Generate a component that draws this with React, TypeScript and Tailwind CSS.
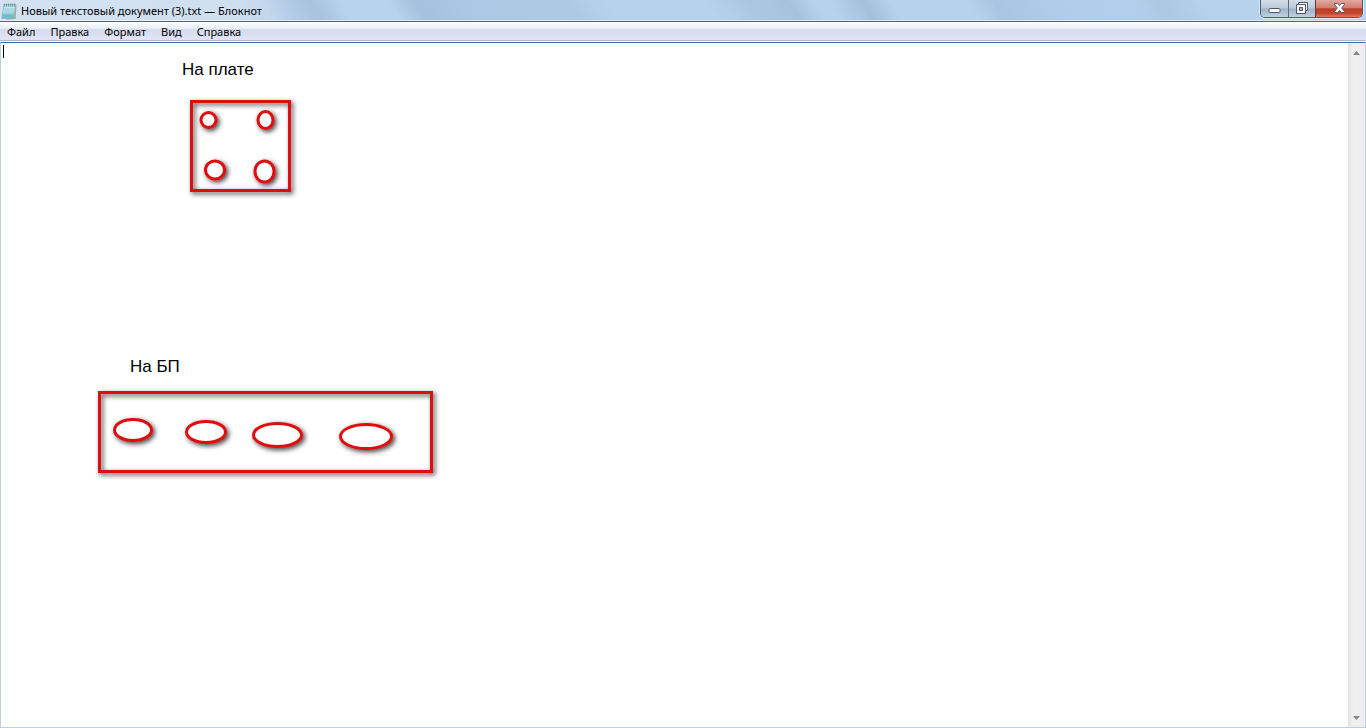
import React, { useState } from 'react';

const menuItems = ['Файл', 'Правка', 'Формат', 'Вид', 'Справка'];

const boardPins = [
  { cx: 207.5, cy: 77, rx: 7.5, ry: 7.5 },
  { cx: 264.5, cy: 77, rx: 7.5, ry: 8.5 },
  { cx: 214, cy: 127, rx: 9.5, ry: 9 },
  { cx: 263.5, cy: 128.5, rx: 9.5, ry: 10.5 },
];

const supplyPins = [
  { cx: 132, cy: 387, rx: 18.5, ry: 10.5 },
  { cx: 205, cy: 389, rx: 19.5, ry: 10.5 },
  { cx: 276.5, cy: 392, rx: 24, ry: 11.5 },
  { cx: 365, cy: 393.5, rx: 25.5, ry: 12 },
];

function NotepadIcon() {
  return (
    <svg width="16" height="18" viewBox="0 0 16 18" aria-hidden="true">
      <path d="M13.500 2l2 1-.8 14-10 .8z" fill="#b5a98d" />
      <path d="M3 2.500h11.500L13 16.500H.8z" fill="#a5d9e4" stroke="#7fb4c0" strokeWidth=".8" />
      <path d="M3.200 5h10.500l-.9 5.500H2.200z" fill="#c6ebf2" />
      <path d="M3.200 7h10M3 9h10M2.600 11h10M2.200 13h10" stroke="#79bccb" strokeWidth=".7" />
      <path d="M1.800 12.500h11L12.600 16H1.200z" fill="#6fb9c8" />
      <path d="M3.500 1.500v3M5.500 1.500v3M7.500 1.500v3M9.500 1.500v3M11.500 1.500v3M13.500 1.500v3" stroke="#738a92" strokeWidth=".8" />
    </svg>
  );
}

function WindowButtons() {
  return (
    <div className="flex h-[18px] self-start mr-[3px] rounded-b-[5px] border border-t-0 border-[#4d5a6b] overflow-hidden shadow-[0_0_0_1px_#ffffff80]">
      <button aria-label="Свернуть" className="w-7 flex items-center justify-center border-r border-[#5c6b7e] bg-[linear-gradient(#d3dde8_0%,#bccad9_48%,#9fb1c5_52%,#bed0e2_100%)]">
        <svg width="13" height="17" viewBox="0 0 13 17">
          <rect x="1" y="8.500" width="11" height="4" rx="1" fill="#fff" stroke="#535666" />
        </svg>
      </button>
      <button aria-label="Свернуть в окно" className="w-[27px] flex items-center justify-center border-r border-[#5c3b3f] bg-[linear-gradient(#d3dde8_0%,#bccad9_48%,#9fb1c5_52%,#bed0e2_100%)]">
        <svg width="14" height="17" viewBox="0 0 14 17">
          <path d="M3.500 2.500h9v8h-9z" fill="#fff" stroke="#535666" strokeLinejoin="round" />
          <path d="M1.500 4.500h9v9h-9z" fill="#fff" stroke="#535666" strokeLinejoin="round" />
          <path d="M4.500 7.500h3v3h-3z" fill="#a9bacd" stroke="#535666" />
        </svg>
      </button>
      <button aria-label="Закрыть" className="w-[46px] flex items-center justify-center bg-[linear-gradient(#e2a99f_0%,#d07d70_46%,#bd3c25_52%,#c54831_80%,#dd7e65_100%)]">
        <svg width="13" height="17" viewBox="0 0 13 17">
          <path d="M1.500 3.500h3l2 2.200 2-2.200h3v1L8.700 8l2.800 3.500v1h-3l-2-2.200-2 2.200h-3v-1L4.300 8 1.500 4.500z" fill="#fff" stroke="#535666" strokeLinejoin="round" />
        </svg>
      </button>
    </div>
  );
}

function Drawing() {
  return (
    <svg className="absolute left-0 top-0 w-[460px] h-[460px] pointer-events-none" viewBox="0 0 460 460" aria-hidden="true">
      <defs>
        <filter id="shadow" x="-50%" y="-50%" width="200%" height="200%">
          <feDropShadow dx="2" dy="2" stdDeviation="2.500" floodColor="#000" floodOpacity="0.75" />
        </filter>
      </defs>
      <g stroke="#df0d10" strokeWidth="3">
        <rect x="190.500" y="58.500" width="98" height="89" fill="none" filter="url(#shadow)" />
        <rect x="98.500" y="349.500" width="332" height="79" fill="none" filter="url(#shadow)" />
        {boardPins.concat(supplyPins).map((pin) => (
          <ellipse key={pin.cx} {...pin} fill="#fff" filter="url(#shadow)" />
        ))}
      </g>
    </svg>
  );
}

export default function App() {
  const [text, setText] = useState('');

  return (
    <div className="min-h-screen flex flex-col bg-white text-black font-['Noto_Sans','Segoe_UI',sans-serif] text-[11px]">
      <header className="h-[22px] flex items-center justify-between border-b border-[#566579] shadow-[inset_0_-1px_0_#dbe8f5] bg-[linear-gradient(59deg,#b9d1ea_0%,#b9d1ea_20%,#a8c2df_23.5%,#b8d3ee_25.5%,#b8d3ee_29%,#a6c1dd_31%,#acc8e4_35%,#adcae5_42%,#b7d2ed_45%,#b7d2ed_52%,#abc8e2_55%,#a7c2de_58%,#b6d2ed_60%,#b6d2ed_61%,#a5c0dc_63.5%,#b7d2ed_65.5%,#b7d2ed_71%,#a8c4e0_73%,#afcdea_77%,#b0cfec_83%,#adc8e2_85%,#b5d1ec_88%,#b9d4ee_100%)]">
        <div className="flex items-center gap-1 pl-px pr-8 h-full bg-[linear-gradient(90deg,#ffffff60,#ffffff50_80%,#ffffff00)]">
          <NotepadIcon />
          <h1 className="leading-5">Новый текстовый документ (3).txt — Блокнот</h1>
        </div>
        <WindowButtons />
      </header>

      <nav className="h-[19px] pt-0.5 flex items-center gap-[15px] px-[7px] border-b border-[#b4b8c6] bg-[linear-gradient(#ffffff_0%,#e7eef6_36%,#d4dbed_38%,#e1e4f6_100%)]">
        {menuItems.map((item) => (
          <button key={item} className="leading-4">{item}</button>
        ))}
      </nav>

      <main className="flex-1 flex mt-px border border-[#b9d1e2] border-t-[#4c6d92]">
        <div className="relative flex-1 flex">
          <textarea
            aria-label="Текст документа"
            className="flex-1 resize-none outline-none p-0.5 font-['Liberation_Mono',monospace] text-[13px]"
            value={text}
            onChange={(e) => setText(e.target.value)}
          />
          <span className="absolute left-[2px] top-[2px] w-px h-[13px] bg-black" />
          <Drawing />
          <p className="absolute left-[181px] top-[17px] leading-5 text-[17px] font-['Liberation_Sans',Arial,sans-serif]">На плате</p>
          <p className="absolute left-[129px] top-[314px] leading-5 text-[17px] font-['Liberation_Sans',Arial,sans-serif]">На БП</p>
        </div>

        {/* scroll bar, nothing to scroll yet */}
        <div className="w-[17px] py-px flex flex-col justify-between bg-[linear-gradient(90deg,#e4e4e4,#f0f0f0_30%,#eeeeee)]">
          <button aria-label="Вверх" disabled className="h-[17px] flex items-center justify-center">
            <svg width="7" height="4" viewBox="0 0 7 4"><path d="M0 4l3.500-4L7 4z" fill="#868686" /></svg>
          </button>
          <button aria-label="Вниз" disabled className="h-[17px] flex items-center justify-center">
            <svg width="7" height="4" viewBox="0 0 7 4"><path d="M0 0h7L3.500 4z" fill="#868686" /></svg>
          </button>
        </div>
      </main>
    </div>
  );
}
